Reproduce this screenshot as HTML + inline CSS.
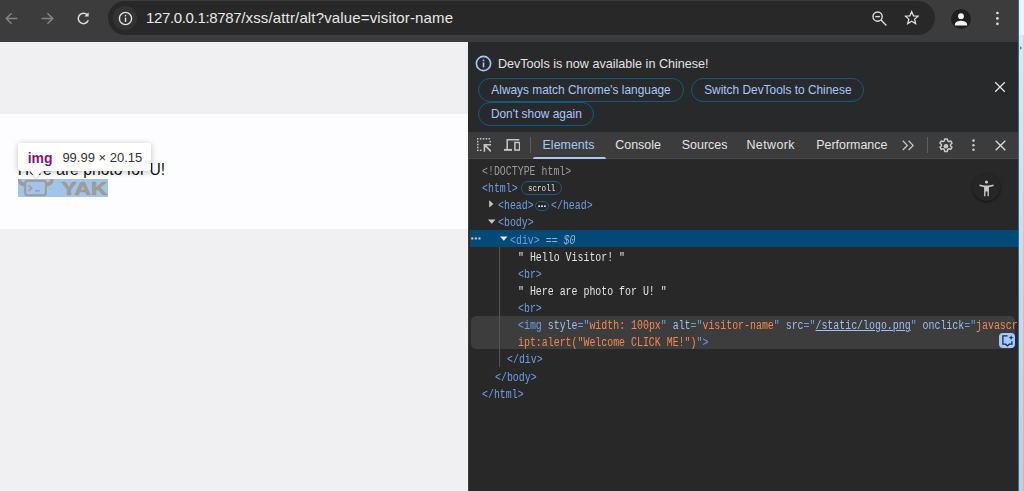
<!DOCTYPE html>
<html>
<head>
<meta charset="utf-8">
<title>xss attr alt</title>
<style>
*{box-sizing:border-box;margin:0;padding:0}
html,body{width:1024px;height:491px;overflow:hidden;background:#282828;font-family:"Liberation Sans",sans-serif}
.abs{position:absolute}
#chrome{position:absolute;left:0;top:0;width:1018px;height:42px;background:#3c3c3c}
#omni{position:absolute;left:108px;top:1px;width:827px;height:34px;border-radius:17px;background:#282828}
#omni .chip{position:absolute;left:5px;top:5px;width:24px;height:24px;border-radius:12px;background:#333}
#url{position:absolute;left:38px;top:0;height:34px;line-height:34px;font-size:15px;color:#e8e8e8;white-space:pre}
#page{position:absolute;left:0;top:42px;width:468px;height:449px;background:#f0f0f2;overflow:hidden}
#strip{position:absolute;left:0;top:71.9px;width:468px;height:114.8px;background:#fdfdff}
#ptext0{position:absolute;left:17.8px;top:103px;font-size:15.7px;line-height:18px;color:#111;white-space:pre}
#ptext{position:absolute;left:17.8px;top:118.6px;font-size:15.7px;line-height:18px;color:#111;white-space:pre}
#hl{position:absolute;left:18px;top:136.7px;width:89.8px;height:18.1px;background:#a0c5e8}
#tip{position:absolute;left:18.4px;top:101.1px;width:132.5px;height:27.6px;border-radius:3px;background:#fff;box-shadow:0 1px 6px rgba(0,0,0,.24);font-size:13px;line-height:30.6px;white-space:pre}
#tip b{position:absolute;left:9.3px;top:-0.4px;color:#881280;font-weight:bold;font-size:14px}
#tip span{position:absolute;left:44px;top:0;color:#333}
#tiparrow{position:absolute;left:29.9px;top:128.5px;width:0;height:0;border-left:6.8px solid transparent;border-right:6.8px solid transparent;border-top:7.6px solid #fff;filter:drop-shadow(0 1px 1px rgba(0,0,0,.18))}
#dt{position:absolute;left:467.9px;top:42px;width:550.1px;height:449px;background:#282828;overflow:hidden;color:#e3e3e3}
#edge1{position:absolute;left:1018px;top:0;width:1.3px;height:491px;background:#0d72d2}
#edge2{position:absolute;left:1019.3px;top:0;width:5px;height:491px;background:linear-gradient(#e6e6e6 8%,#dadada 45%,#cbcbcb 100%);border-right:1px solid rgba(0,0,0,.07)}
#edge3{position:absolute;left:1019.3px;top:0;width:5px;height:34.5px;background:#f1f1f1}
#edge4{position:absolute;left:1019.6px;top:46.4px;width:0;height:0;border-top:2.4px solid transparent;border-bottom:2.4px solid transparent;border-left:2.2px solid #777}

#dtline{position:absolute;left:0;top:0;width:551px;height:1px;background:#4a4a4a}
#dtleft{position:absolute;left:0;top:0;width:1px;height:449px;background:#3d3d3d}
#info{position:absolute;left:0;top:0;width:551px;height:89.7px;background:#28292b}
#infotxt{position:absolute;left:30px;top:12.6px;font-size:12.6px;line-height:18px;color:#e3e3e3;white-space:pre}
.pill{position:absolute;height:24px;border:1px solid #0c5c84;border-radius:12px;font-size:11.9px;line-height:22px;color:#a8c7fa;text-align:center;white-space:pre}
#tabs{position:absolute;left:0;top:89.5px;width:550px;height:27.5px;background:#3c3c3c;border-bottom:1px solid #4a4a4a}
.tab{position:absolute;top:0.8px;height:26px;line-height:26px;font-size:12.45px;color:#e3e3e3;white-space:pre}
#tabul{position:absolute;left:65px;top:114.6px;width:73px;height:2.4px;background:#a8c7fa;border-radius:2px 2px 0 0}
.vdiv{position:absolute;top:95px;width:1px;height:16px;background:#5e5e5e}
#tree{position:absolute;left:0;top:118px;width:550px;height:331px;font-family:"Liberation Mono",monospace;font-size:12px}
.ln{position:absolute;height:17.2px;line-height:17.2px;white-space:pre;transform:scaleX(.826);transform-origin:0 50%;color:#6c9ee6}
.t{color:#6c9ee6}.a{color:#a0bff2}.v{color:#f4874f}.x{color:#e3e3e3}.g{color:#9a9a9a}
#sel{position:absolute;left:1.8px;top:188.1px;width:550px;height:16.7px;background:#004a77}
#hov{position:absolute;left:3.5px;top:274.3px;width:544px;height:32.4px;background:#3d3d3d;border-radius:5px}
#guide{position:absolute;left:31.4px;top:205px;width:1px;height:120px;background:#555}

.badge{position:absolute;border:1px solid #0c6089;border-radius:7px;color:#e3e3e3}
.badge span{position:absolute;left:6.3px;top:1.2px;font-family:"Liberation Mono",monospace;font-size:9px;line-height:13px;transform:scaleX(.84);transform-origin:0 50%;white-space:pre}
#a11y{position:absolute;left:505px;top:131.9px;width:27px;height:27px;border-radius:14px;background:#262626;box-shadow:0 1px 3px rgba(0,0,0,.55)}
#aibtn{position:absolute;left:531.5px;top:290.7px;width:16px;height:15.6px;border-radius:4px;background:#a8c7fa}
.eq{color:#9bb4d6}
</style>
</head>
<body>
<div id="chrome">
  
  <svg class="abs" style="left:4px;top:11px" width="15" height="15" viewBox="0 0 15 15" fill="none" stroke="#858585" stroke-width="1.5"><path d="M13.4 7.5 H2.6 M7.6 2.2 L2.3 7.5 L7.6 12.8"/></svg>
  <svg class="abs" style="left:40px;top:11px" width="15" height="15" viewBox="0 0 15 15" fill="none" stroke="#858585" stroke-width="1.5"><path d="M1.6 7.5 H12.4 M7.4 2.2 L12.7 7.5 L7.4 12.8"/></svg>
  <svg class="abs" style="left:76px;top:11px" width="15" height="15" viewBox="0 0 15 15" fill="none" stroke="#dedede" stroke-width="1.5"><path d="M12.3 9.3 A5.2 5.2 0 1 1 11.2 3.8"/><path d="M12.6 1.2 V5.4 H8.4 Z" fill="#dedede" stroke="none"/></svg>
  <svg class="abs" style="left:951px;top:8.9px" width="20" height="20" viewBox="0 0 20 20"><circle cx="10" cy="10" r="10" fill="#1f1f1f"/><circle cx="10" cy="7.2" r="2.9" fill="#f2f2f2"/><path d="M3.9 15.6 c0-3 4-3.9 6.1-3.9 s6.1.9 6.1 3.9 v1 h-12.2z" fill="#f2f2f2"/></svg>
  <svg class="abs" style="left:994.5px;top:11px" width="5" height="15" viewBox="0 0 5 15" fill="#dedede"><circle cx="2.4" cy="2" r="1.35"/><circle cx="2.4" cy="7.4" r="1.35"/><circle cx="2.4" cy="12.8" r="1.35"/></svg>
  <div id="omni"><div class="chip"></div><svg class="abs" style="left:10px;top:10px" width="15" height="15" viewBox="0 0 15 15"><circle cx="7.5" cy="7.5" r="6.1" fill="none" stroke="#e3e3e3" stroke-width="1.4"/><rect x="6.8" y="6.6" width="1.45" height="4.3" fill="#e3e3e3"/><rect x="6.8" y="3.9" width="1.45" height="1.5" fill="#e3e3e3"/></svg>
<svg class="abs" style="left:763px;top:9px" width="17" height="17" viewBox="0 0 17 17" fill="none" stroke="#dedede" stroke-width="1.4"><circle cx="6.6" cy="6.6" r="4.6"/><path d="M10 10 L15.4 15.4"/><path d="M4.3 6.6 H8.9"/></svg>
<svg class="abs" style="left:795.7px;top:9.1px" width="15.4" height="15.4" viewBox="0 0 17 17" fill="none" stroke="#dedede" stroke-width="1.4" stroke-linejoin="miter"><path d="M8.5 1.8 L10.5 6.4 L15.5 6.8 L11.7 10.1 L12.9 15 L8.5 12.4 L4.1 15 L5.3 10.1 L1.5 6.8 L6.5 6.4 Z"/></svg>
<div id="url"><span id="u1" style="letter-spacing:-.35px">127.0.0.1:8787</span><span id="u2" style="letter-spacing:.15px">/xss/attr/alt?value=visitor-name</span></div></div>
</div>
<div id="page">
  <div id="strip"></div>
  <div id="ptext0">Hello Visitor!</div>
  <div id="ptext">Here are photo for U!</div>
  <div id="hl"></div>
<svg id="logo" class="abs" style="left:18px;top:136.7px" width="90" height="18.2" viewBox="0 0 90 18.2">
<g fill="none" stroke="#a09b98" stroke-width="2.1"><rect x="7.1" y="1.8" width="20.8" height="14.4" rx="2.4"/><path d="M10.4 6.5 L13.6 9.2 L10.4 11.9" stroke-width="1.5"/><path d="M17 11.8 H21.8" stroke-width="1.5"/></g>
<path d="M0 0 C0.1 4.8 2.4 7.2 6.6 7.4 L6.6 3.4 C4.6 3.3 3.1 2.2 3 0Z" fill="#a09b98"/>
<path d="M35.6 0 C35.5 4.8 33.2 7.2 28.6 7.4 L28.6 3.4 C30.8 3.3 32.5 2.2 32.6 0Z" fill="#a09b98"/>
<text x="43.6" y="15.6" font-family="Liberation Sans, sans-serif" font-weight="bold" font-size="17.7" fill="#a09b98" stroke="#a09b98" stroke-width="0.7" textLength="45.8" lengthAdjust="spacingAndGlyphs">YAK</text>
</svg>

  <div id="tip"><b>img</b><span>99.99 × 20.15</span></div>
  <div id="tiparrow"></div>
</div>
<div id="dt">
<div id="dtline"></div><div id="dtleft"></div>
<div id="info">
  <svg class="abs" style="left:7.3px;top:13.2px" width="17" height="17" viewBox="0 0 17 17"><circle cx="8.5" cy="8.5" r="7.1" fill="none" stroke="#a8c7fa" stroke-width="1.6"/><rect x="7.7" y="7.5" width="1.6" height="4.8" fill="#a8c7fa"/><rect x="7.7" y="4.6" width="1.6" height="1.7" fill="#a8c7fa"/></svg>
  <div id="infotxt">DevTools is now available in Chinese!</div>
  <div class="pill" style="left:10.3px;top:36px;width:205.7px">Always match Chrome's language</div>
  <div class="pill" style="left:223.3px;top:36px;width:173.3px">Switch DevTools to Chinese</div>
  <div class="pill" style="left:10.3px;top:60.2px;width:116.3px">Don't show again</div>
  <svg class="abs" style="left:526px;top:39px" width="12" height="12" viewBox="0 0 12 12"><path d="M1.2 1.2L10.8 10.8M10.8 1.2L1.2 10.8" stroke="#e3e3e3" stroke-width="1.3" fill="none"/></svg>
</div>
<div id="tabs">
  <div class="tab" style="left:74.7px;color:#a8c7fa">Elements</div>
  <div class="tab" style="left:147.4px">Console</div>
  <div class="tab" style="left:213.9px">Sources</div>
  <div class="tab" style="left:278.6px;letter-spacing:.4px">Network</div>
  <div class="tab" style="left:348.3px">Performance</div>
</div>

<svg class="abs" style="left:8.75px;top:96px" width="14.5" height="14" viewBox="0 0 14.5 14" fill="#c7c7c7">
 <rect x="0" y="0" width="1.5" height="1.5"/><rect x="2.9" y="0" width="1.5" height="1.5"/><rect x="5.8" y="0" width="1.5" height="1.5"/><rect x="8.7" y="0" width="1.5" height="1.5"/><rect x="11.6" y="0" width="1.5" height="1.5"/>
 <rect x="0" y="2.9" width="1.5" height="1.5"/><rect x="0" y="5.8" width="1.5" height="1.5"/><rect x="0" y="8.7" width="1.5" height="1.5"/><rect x="0" y="11.6" width="1.5" height="1.5"/>
 <rect x="2.9" y="11.6" width="1.5" height="1.5"/><rect x="12.6" y="2.9" width="1.5" height="1.5"/>
 <path d="M6.6 6 H14.3 V7.6 H9.4 L14.5 12.8 L13.4 13.9 L8.2 8.8 V13.7 H6.6 Z"/>
</svg>
<svg class="abs" style="left:35.9px;top:97.2px" width="16.4" height="12" viewBox="0 0 16.4 12" fill="none" stroke="#c7c7c7" stroke-width="1.5">
 <path d="M15.3 0.75 H3.2 V10.2"/><path d="M0 10.9 H8" stroke-width="1.9"/><rect x="10.9" y="3.5" width="4.7" height="7.6"/>
</svg>
<svg class="abs" style="left:434.5px;top:97.8px" width="13" height="11" viewBox="0 0 13 11" fill="none" stroke="#c7c7c7" stroke-width="1.3"><path d="M0.8 0.8 L5.3 5.4 L0.8 10"/><path d="M6.6 0.8 L11.1 5.4 L6.6 10"/></svg>
<svg class="abs" style="left:470px;top:95.9px" width="16" height="16" viewBox="0 0 16 16"><path fill="none" stroke="#c7c7c7" stroke-width="1.5" stroke-linejoin="round" d="M6.7 1 h2.6 l.4 1.9 1.2.7 1.8-.6 1.3 2.2-1.4 1.3 v1.4 l1.4 1.3-1.3 2.2-1.8-.6-1.2.7-.4 1.9 h-2.6 l-.4-1.9-1.2-.7-1.8.6-1.3-2.2 1.4-1.3 v-1.4 l-1.4-1.3 1.3-2.2 1.8.6 1.2-.7z"/><circle cx="8" cy="8.2" r="2.3" fill="#c7c7c7"/></svg>
<svg class="abs" style="left:503px;top:97px" width="5" height="13" viewBox="0 0 5 13" fill="#c7c7c7"><circle cx="2.5" cy="1.6" r="1.3"/><circle cx="2.5" cy="6.2" r="1.3"/><circle cx="2.5" cy="10.8" r="1.3"/></svg>
<svg class="abs" style="left:527px;top:98px" width="11" height="11" viewBox="0 0 11 11"><path d="M0.7 0.7L10.3 10.3M10.3 0.7L0.7 10.3" stroke="#dcdcdc" stroke-width="1.3" fill="none"/></svg>
<div id="tabul"></div>
<div class="vdiv" style="left:62px"></div>
<div class="vdiv" style="left:459px"></div>
<div id="sel"></div><div id="hov"></div><div id="guide"></div>

<svg class="abs" style="left:21.2px;top:157.7px" width="5" height="8" viewBox="0 0 5 8"><path d="M0.2 0.2 L4.4 3.9 L0.2 7.6Z" fill="#c7c7c7"/></svg>
<svg class="abs" style="left:20.6px;top:176.9px" width="8" height="6" viewBox="0 0 8 6"><path d="M0 0.4 H7.5 L3.75 4.8Z" fill="#c7c7c7"/></svg>
<svg class="abs" style="left:32.1px;top:194.0px" width="8" height="6" viewBox="0 0 8 6"><path d="M0 0.4 H7.5 L3.75 4.8Z" fill="#e8e8e8"/></svg>
<svg class="abs" style="left:3.5px;top:195.3px" width="10" height="3" viewBox="0 0 10 3" fill="#c7c7c7"><rect x="0.2" y="0.4" width="2.1" height="2.1"/><rect x="3.8" y="0.4" width="2.1" height="2.1"/><rect x="7.4" y="0.4" width="2.1" height="2.1"/></svg>
<div class="badge" style="left:53.1px;top:139.3px;width:41.2px;height:14px"><span>scroll</span></div>
<div class="badge" style="left:67.2px;top:159.4px;width:14px;height:9.2px"><svg class="abs" style="left:2.4px;top:2.6px" width="8" height="2.4" viewBox="0 0 8 2.4" fill="#e3e3e3"><circle cx="1.1" cy="1.2" r="1"/><circle cx="4" cy="1.2" r="1"/><circle cx="6.9" cy="1.2" r="1"/></svg></div>
<div id="a11y"><svg class="abs" style="left:6.3px;top:6.2px" width="15" height="17" viewBox="0 0 15 17" fill="#c7c7c7"><circle cx="7.5" cy="2" r="1.6"/><path d="M0.6 4.6 L5.2 5.4 H9.8 L14.4 4.6 L14.7 6 L9.9 7.2 V16.2 H8.5 V11.6 H6.5 V16.2 H5.1 V7.2 L0.3 6Z"/></svg></div>
<div id="aibtn"><svg class="abs" style="left:2.2px;top:2.2px" width="12" height="12" viewBox="0 0 12 12" fill="none" stroke="#062e6f" stroke-width="1.3"><path d="M5.6 0.9 H0.9 V9.2 H3.6 L5.4 10.9 L7.2 9.2 H9.9 V6.2"/><path d="M9.1 0 L9.8 1.9 L11.7 2.6 L9.8 3.3 L9.1 5.2 L8.4 3.3 L6.5 2.6 L8.4 1.9Z" fill="#062e6f" stroke="none"/></svg></div>
<div id="tree">
<div class="ln" style="left:14.6px;top:4.10px"><span class="g">&lt;!DOCTYPE html&gt;</span></div>
<div class="ln" style="left:14.6px;top:21.22px">&lt;html&gt;</div>
<div class="ln" style="left:30.2px;top:38.34px">&lt;head&gt;</div>
<div class="ln" style="left:83.5px;top:38.34px">&lt;/head&gt;</div>
<div class="ln" style="left:30.2px;top:55.46px">&lt;body&gt;</div>
<div class="ln" style="left:42px;top:72.58px">&lt;div&gt;<i class="eq"> == $0</i></div>
<div class="ln" style="left:50.4px;top:89.70px"><span class="x">" Hello Visitor! "</span></div>
<div class="ln" style="left:50.4px;top:106.82px">&lt;br&gt;</div>
<div class="ln" style="left:50.4px;top:123.94px"><span class="x">" Here are photo for U! "</span></div>
<div class="ln" style="left:50.4px;top:141.06px">&lt;br&gt;</div>
<div class="ln" style="left:50.4px;top:158.18px">&lt;img <span class="a">style</span>="<span class="v">width: 100px</span>" <span class="a">alt</span>="<span class="v">visitor-name</span>" <span class="a">src</span>="<u class="a">/static/logo.png</u>" <span class="a">onclick</span>="<span class="v">javascr</span></div>
<div class="ln" style="left:50.4px;top:175.30px"><span class="v">ipt:alert("Welcome CLICK ME!")</span>"&gt;</div>
<div class="ln" style="left:39px;top:192.42px">&lt;/div&gt;</div>
<div class="ln" style="left:27px;top:209.54px">&lt;/body&gt;</div>
<div class="ln" style="left:14.6px;top:226.66px">&lt;/html&gt;</div>
</div>
</div>
<div id="edge1"></div><div id="edge2"></div><div id="edge3"></div><div id="edge4"></div>
</body>
</html>
